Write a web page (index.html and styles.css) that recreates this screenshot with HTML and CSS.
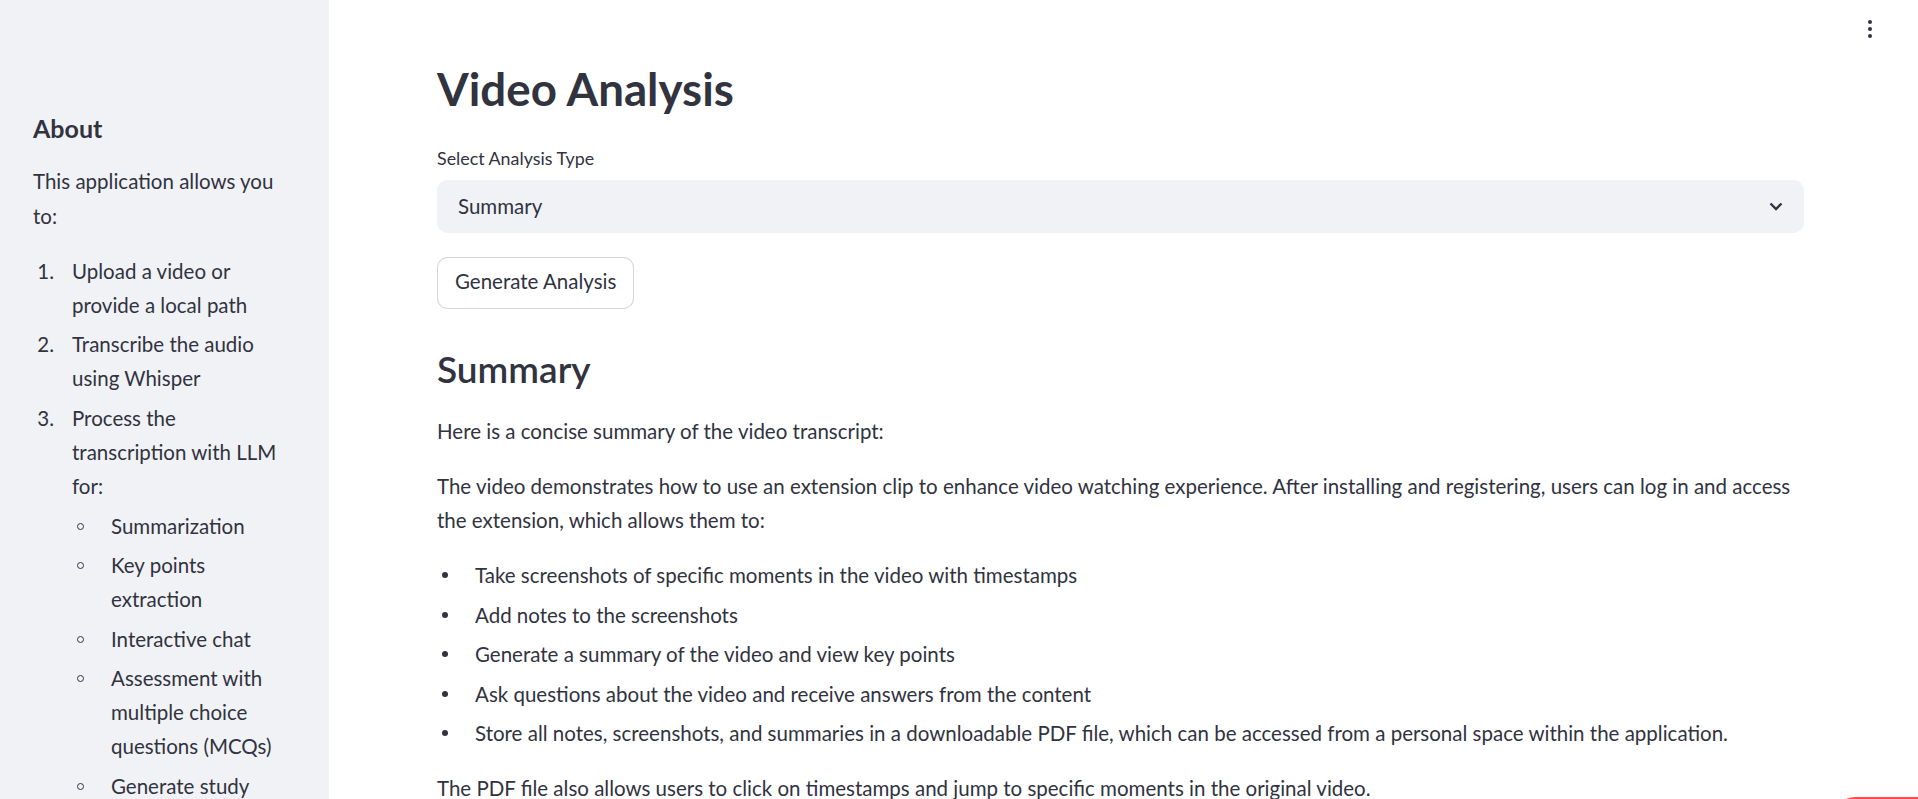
FILE: index.html
```html
<!DOCTYPE html>
<html lang="en">
<head>
<meta charset="utf-8">
<title>Video Analysis</title>
<link rel="stylesheet" href="styles.css">
</head>
<body>
<div class="app">
  <aside class="sidebar">
    <h3 class="side-title">About</h3>
    <p class="side-p">This application allows you to:</p>
    <ol class="olist">
      <li><span>Upload a video or provide a local path</span></li>
      <li><span>Transcribe the audio using Whisper</span></li>
      <li><span>Process the transcription with LLM for:</span>
        <ul class="sublist">
          <li><span>Summarization</span></li>
          <li><span>Key points extraction</span></li>
          <li><span>Interactive chat</span></li>
          <li><span>Assessment with multiple choice questions (MCQs)</span></li>
          <li><span>Generate study notes</span></li>
        </ul>
      </li>
    </ol>
  </aside>
  <main class="main">
    <button class="menu-btn" aria-label="Main menu">
      <svg width="4" height="18" viewBox="0 0 4 18"><circle cx="2" cy="2" r="2" fill="#31333f"/><circle cx="2" cy="9" r="2" fill="#31333f"/><circle cx="2" cy="16" r="2" fill="#31333f"/></svg>
    </button>
    <div class="block">
      <h1 class="title">Video Analysis</h1>
      <div class="field">
        <label class="field-label">Select Analysis Type</label>
        <div class="select">
          <span>Summary</span>
          <svg width="14" height="9" viewBox="0 0 14 9"><path d="M1.5 1.5 L7 7 L12.5 1.5" fill="none" stroke="#31333f" stroke-width="2.4"/></svg>
        </div>
      </div>
      <button class="btn">Generate Analysis</button>
      <h3 class="subheader">Summary</h3>
      <div class="md">
        <p>Here is a concise summary of the video transcript:</p>
        <p>The video demonstrates how to use an extension clip to enhance video watching experience. After installing and registering, users can log in and access the extension, which allows them to:</p>
        <ul class="blist">
          <li><span>Take screenshots of specific moments in the video with timestamps</span></li>
          <li><span>Add notes to the screenshots</span></li>
          <li><span>Generate a summary of the video and view key points</span></li>
          <li><span>Ask questions about the video and receive answers from the content</span></li>
          <li><span>Store all notes, screenshots, and summaries in a downloadable PDF file, which can be accessed from a personal space within the application.</span></li>
        </ul>
        <p>The PDF file also allows users to click on timestamps and jump to specific moments in the original video.</p>
      </div>
    </div>
    <div class="status-pill"></div>
  </main>
</div>
</body>
</html>
```

FILE: styles.css
```css
html, body {
  margin: 0;
  padding: 0;
  height: 799px;
  overflow: hidden;
  background: #ffffff;
}

body {
  font-family: "Lato", "Noto Sans", sans-serif;
  color: #31333f;
  font-size: 20.5px;
  line-height: 34.13px;
}

.app {
  display: flex;
  height: 799px;
  overflow: hidden;
}

/* Sidebar */
.sidebar {
  width: 329px;
  flex-shrink: 0;
  box-sizing: border-box;
  background: #f0f2f6;
  padding: 113px 40px 0 33px;
  overflow: hidden;
}

.side-title {
  margin: 0 0 21.4px;
  font-size: 25px;
  line-height: 30px;
  font-weight: 700;
}

.side-p {
  margin: 0 0 21px;
}

.olist, .sublist, .blist {
  list-style: none;
  margin: 0;
  padding: 0;
}

.olist {
  counter-reset: num;
}

.olist > li {
  counter-increment: num;
  display: grid;
  grid-template-columns: 39px 1fr;
}

.olist > li::before {
  content: counter(num) ".";
  text-align: right;
  padding-right: 18px;
}

.olist > li + li,
.sublist > li + li,
.blist > li + li {
  margin-top: 5.33px;
}

.sublist {
  grid-column: 2;
  margin-top: 5.33px;
}

.sublist > li {
  display: grid;
  grid-template-columns: 39px 1fr;
}

.sublist > li::before {
  content: "";
  width: 5px;
  height: 5px;
  border: 1.2px solid #31333f;
  border-radius: 50%;
  margin: 14px 0 0 4.5px;
}

/* Main */
.main {
  flex: 1;
  position: relative;
  min-width: 0;
}

.menu-btn {
  position: absolute;
  top: 20px;
  right: 46px;
  padding: 0;
  border: 0;
  background: transparent;
  display: flex;
}

.block {
  padding: 61.6px 114px 0 108px;
}

.title {
  margin: 0;
  font-size: 45.7px;
  line-height: 54.84px;
  font-weight: 700;
}

.field {
  margin-top: 28.4px;
}

.field-label {
  display: block;
  font-size: 17.85px;
  line-height: 26.6px;
  margin-bottom: 8.6px;
}

.select {
  height: 53px;
  box-sizing: border-box;
  background: #f0f2f6;
  border-radius: 10.67px;
  display: flex;
  align-items: center;
  justify-content: space-between;
  padding: 0 21px 2px 21px;
  line-height: 24px;
}

.select svg {
  margin-top: 2px;
}

.btn {
  display: block;
  margin-top: 23.7px;
  height: 52.3px;
  box-sizing: border-box;
  padding: 0 17px 3px;
  border: 1px solid rgba(49, 51, 63, 0.2);
  border-radius: 10.67px;
  background: #ffffff;
  font-family: inherit;
  font-size: 20.5px;
  color: #31333f;
}

.subheader {
  margin: 37.8px 0 0;
  font-size: 37px;
  line-height: 44.4px;
  font-weight: 600;
}

.md {
  margin-top: 22.8px;
}

.md p {
  margin: 0 0 21px;
}

.blist {
  margin-bottom: 21px;
}

.blist > li {
  display: grid;
  grid-template-columns: 38px 1fr;
}

.blist > li::before {
  content: "";
  width: 6px;
  height: 6px;
  border-radius: 50%;
  background: #31333f;
  margin: 14px 0 0 5px;
}

.status-pill {
  position: absolute;
  left: 1506px;
  top: 796.5px;
  width: 120px;
  height: 40px;
  border-radius: 20px;
  background: #ff4b4b;
}
```
